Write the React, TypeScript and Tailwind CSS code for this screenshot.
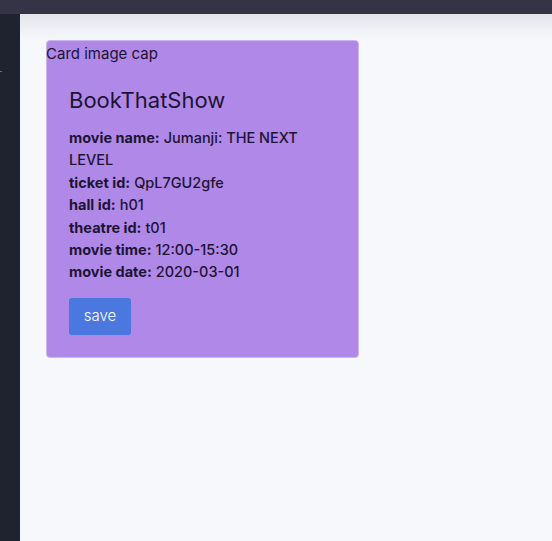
import React from "react";

const rows: [string, string][] = [
  ["ticket id:", "QpL7GU2gfe"],
  ["hall id:", "h01"],
  ["theatre id:", "t01"],
  ["movie time:", "12:00-15:30"],
  ["movie date:", "2020-03-01"],
];

const App = () => {
  return (
    <div
      className="w-[552px] h-[541px] flex flex-col bg-[#f7f8fc] overflow-hidden"
      style={{ fontFamily: "Inter, 'Noto Sans', sans-serif" }}
    >
      <div className="h-[14px] bg-[#343446] shrink-0" />
      <div className="flex flex-1">
        <div className="w-[20px] bg-[#1f2330] relative">
          <div className="absolute left-0 top-[57px] w-[2px] h-[1px] bg-gray-500" />
        </div>
        <div className="flex-1 bg-gradient-to-b from-[#e5e6eb] to-[#f7f8fc] to-[26px] pl-[26px] pt-[26px]">
          <div className="w-[313px] bg-[#b088e8] border border-[#cbb5f0] rounded-[4px] text-[#1c1433]">
            <div className="text-[15px] leading-[22px] -ml-px pt-[2px]">Card image cap</div>
            <div className="px-[22px] pt-[22px] pb-[22px]">
              <h5 className="text-[22px] leading-[26px] mb-[14px]">BookThatShow</h5>
              <div className="text-[14.5px] leading-[22.4px] w-[240px] font-[450]">
                <p>
                  <b className="font-bold mr-[4px]">movie name:</b>
                  <span>Jumanji: THE NEXT LEVEL</span>
                </p>
                {rows.map(([k, v]) => (
                  <p key={k}>
                    <b className="font-bold mr-[4px]">{k}</b>
                    <span>{v}</span>
                  </p>
                ))}
              </div>
              <button className="mt-[14px] w-[62px] h-[37px] bg-[#4a78de] text-white text-[15px] font-light rounded-[3px]">
                save
              </button>
            </div>
          </div>
        </div>
      </div>
    </div>
  );
};

export default App;
